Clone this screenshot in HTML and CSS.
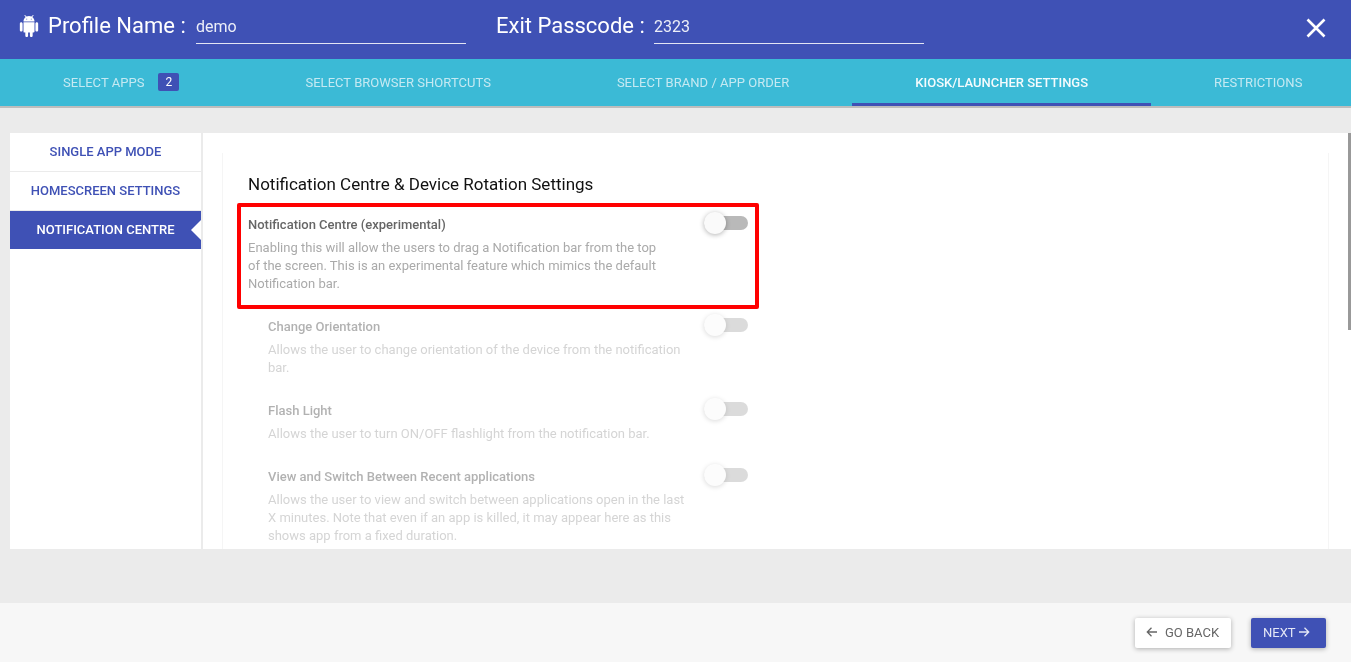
FILE: index.html
```html
<!DOCTYPE html>
<html lang="en">
<head>
<meta charset="utf-8">
<title>Profile</title>
<link rel="stylesheet" href="styles.css">
</head>
<body>
<div class="page">
  <header class="topbar">
    <svg class="android" viewBox="0 0 24 24"><path d="M6 18c0 .55.45 1 1 1h1v3.5c0 .83.67 1.5 1.5 1.5s1.5-.67 1.5-1.5V19h2v3.5c0 .83.67 1.5 1.5 1.5s1.5-.67 1.5-1.5V19h1c.55 0 1-.45 1-1V8H6v10zM3.5 8C2.67 8 2 8.67 2 9.5v7c0 .83.67 1.5 1.5 1.5S5 17.33 5 16.5v-7C5 8.67 4.33 8 3.5 8zm17 0c-.83 0-1.5.67-1.5 1.5v7c0 .83.67 1.5 1.5 1.5s1.5-.67 1.5-1.5v-7c0-.83-.67-1.5-1.5-1.5zm-4.97-5.84l1.3-1.3c.2-.2.2-.51 0-.71-.2-.2-.51-.2-.71 0l-1.48 1.48C13.85 1.23 12.95 1 12 1c-.96 0-1.86.23-2.66.63L7.85.15c-.2-.2-.51-.2-.71 0-.2.2-.2.51 0 .71l1.31 1.31C6.97 3.26 6 5.01 6 7h12c0-1.99-.97-3.75-2.47-4.84zM10 5H9V4h1v1zm5 0h-1V4h1v1z"/></svg>
    <span class="label label-profile">Profile Name :</span>
    <span class="field field-profile">demo</span>
    <span class="label label-pass">Exit Passcode :</span>
    <span class="field field-pass">2323</span>
    <svg class="close" viewBox="0 0 20 20"><path d="M1.5 1.5L18.5 18.5M18.5 1.5L1.5 18.5"/></svg>
  </header>
  <nav class="tabs">
    <div class="tab">Select Apps<span class="badge">2</span></div>
    <div class="tab">Select Browser Shortcuts</div>
    <div class="tab">Select Brand / App Order</div>
    <div class="tab tab-active">Kiosk/Launcher Settings</div>
    <div class="tab">Restrictions</div>
  </nav>
  <main class="main">
    <div class="panel">
      <aside class="sidebar">
        <div class="side-item">Single App Mode</div>
        <div class="side-item">Homescreen Settings</div>
        <div class="side-item side-active">Notification Centre</div>
      </aside>
      <section class="content">
        <div class="card">
          <h2 class="title">Notification Centre &amp; Device Rotation Settings</h2>
          <div class="highlight">
            <div class="setting">
              <div class="text">
                <div class="name">Notification Centre (experimental)</div>
                <div class="desc">Enabling this will allow the users to drag a Notification bar from the top of the screen. This is an experimental feature which mimics the default Notification bar.</div>
              </div>
              <div class="toggle"><span class="knob"></span></div>
            </div>
          </div>
          <div class="subs">
            <div class="setting sub-a">
              <div class="text">
                <div class="name">Change Orientation</div>
                <div class="desc">Allows the user to change orientation of the device from the notification bar.</div>
              </div>
              <div class="toggle"><span class="knob"></span></div>
            </div>
            <div class="setting sub-b">
              <div class="text">
                <div class="name">Flash Light</div>
                <div class="desc">Allows the user to turn ON/OFF flashlight from the notification bar.</div>
              </div>
              <div class="toggle"><span class="knob"></span></div>
            </div>
            <div class="setting sub-c">
              <div class="text">
                <div class="name">View and Switch Between Recent applications</div>
                <div class="desc">Allows the user to view and switch between applications open in the last X minutes. Note that even if an app is killed, it may appear here as this shows app from a fixed duration.</div>
              </div>
              <div class="toggle"><span class="knob"></span></div>
            </div>
          </div>
        </div>
      </section>
      <div class="scrollthumb"></div>
    </div>
  </main>
  <footer class="footer">
    <button class="btn btn-back"><svg class="arrow" viewBox="0 0 12 12"><path d="M11 6H1.500M5.500 1.800L1.300 6l4.200 4.200"/></svg>Go Back</button>
    <button class="btn btn-next">Next<svg class="arrow" viewBox="0 0 12 12"><path d="M1 6h9.500M6.500 1.800L10.700 6l-4.200 4.200"/></svg></button>
  </footer>
</div>
</body>
</html>
```
FILE: styles.css
```css
* { box-sizing: border-box; }
html, body { margin: 0; height: 100%; overflow: hidden; }
body { font-family: Roboto, "Liberation Sans", sans-serif; background: #ebebeb; }
.page { width: 1351px; height: 662px; display: flex; flex-direction: column; will-change: transform; }

.topbar { height: 59px; background: #3f51b5; color: #fff; display: flex; align-items: flex-start; flex: none; position: relative; }
.android { width: 22px; height: 22px; fill: #fff; margin: 15px 0 0 18px; flex: none; }
.label { font-size: 22px; line-height: 26px; margin-top: 13px; white-space: nowrap; flex: none; }
.label-profile { margin-left: 8px; width: 148px; }
.label-pass { margin-left: 30px; width: 158px; }
.field { height: 44px; padding-top: 17px; font-size: 16px; line-height: 19px; border-bottom: 1px solid #e3e5f4; color: #eceef8; flex: none; }
.field-profile { width: 270px; }
.field-pass { width: 270px; }
.close { position: absolute; left: 1306px; top: 18px; width: 20px; height: 20px; fill: none; stroke: #fff; stroke-width: 2.6; }

.tabs { height: 49px; flex: none; background: #3bbad6; border-bottom: 2px solid #bdbdbd; display: flex; overflow: hidden; }
.tab { flex: none; padding: 0 63px 1px; height: 47px; display: flex; align-items: center; font-size: 13px; letter-spacing: 0.03px; text-transform: uppercase; color: #c5e9f2; white-space: nowrap; }
.tab-active { color: #f4fbfd; font-weight: 500; letter-spacing: 0; height: 48px; border-bottom: 4px solid #3f51b5; padding-top: 3px; padding-bottom: 0; }
.badge { margin-left: 14px; width: 21px; height: 18px; background: #3f51b5; color: #fff; border-radius: 2px; font-size: 12px; line-height: 18px; text-align: center; }

.main { flex: 1; padding: 25px 0 0 10px; min-height: 0; }
.panel { width: 1341px; height: 416px; background: #fff; display: flex; overflow: hidden; position: relative; }
.sidebar { width: 193px; flex: none; border-right: 2px solid #ebebeb; }
.side-item { height: 39px; padding-bottom: 2px; display: flex; align-items: center; justify-content: center; font-size: 13px; font-weight: 500; text-transform: uppercase; color: #3f51b5; border-bottom: 1px solid #ebebeb; position: relative; }
.side-active { height: 38px; background: #3f51b5; color: #fff; border-bottom: 0; }
.side-active::after { content: ""; position: absolute; right: 0; top: 9px; border: 10px solid transparent; border-right-color: #fff; border-left-width: 0; }

.content { flex: 1; padding: 20px 19px 0 19px; min-width: 0; }
.card { width: 1107px; height: 600px; border-left: 1px solid #f5f5f5; border-right: 1px solid #f5f5f5; padding: 21px 0 0 14px; }
.title { margin: 0 0 9px 11px; font-size: 17px; line-height: 20px; font-weight: 400; color: #111; }
.highlight { width: 522px; height: 106px; border: 4px solid #ff0000; border-radius: 2px; padding: 9px 0 0 7px; }
.setting { display: flex; align-items: flex-start; }
.text { width: 420px; flex: none; }
.name { font-size: 13px; line-height: 18px; font-weight: 500; color: #666; }
.desc { font-size: 13px; line-height: 18px; margin-top: 5px; color: #aaa; }
.toggle { width: 44px; height: 14px; margin: 0 0 0 36px; background: #b9b9b9; border-radius: 7px; position: relative; flex: none; }
.toggle .knob { position: absolute; left: 0; top: -4px; width: 22px; height: 22px; border-radius: 50%; background: #fafafa; box-shadow: 0 1px 5px rgba(0,0,0,.3); }
.subs { padding-left: 31px; opacity: .5; width: 522px; }
.subs .text { width: 418px; }
.subs .toggle { margin-left: 18px; }
.sub-a { padding-top: 9px; }
.sub-b { padding-top: 25px; }
.sub-c { padding-top: 25px; }

.scrollthumb { position: absolute; right: 0; top: 0; width: 3px; height: 197px; background: #999; }

.footer { height: 59px; flex: none; background: #f7f7f7; display: flex; justify-content: flex-end; align-items: flex-start; gap: 20px; padding: 15px 25px 0 0; }
.btn { height: 30px; border: 0; border-radius: 2px; font-family: inherit; font-size: 13px; text-transform: uppercase; display: flex; align-items: center; justify-content: flex-start; box-shadow: 0 1px 5px rgba(0,0,0,.3); padding: 0 0 2px; }
.btn-back { width: 96px; background: #fff; color: #666; gap: 7px; padding-left: 11px; }
.btn-next { width: 75px; background: #3f51b5; color: #e4e7f6; gap: 2px; padding-left: 12px; }
.arrow { width: 12px; height: 12px; fill: none; stroke: currentColor; stroke-width: 1.3; }
```
